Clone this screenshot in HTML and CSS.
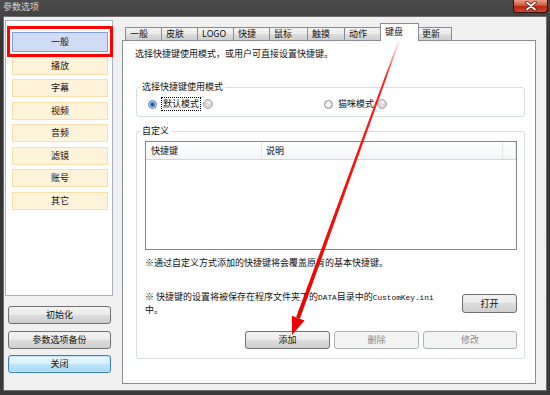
FILE: index.html
```html
<!DOCTYPE html>
<html lang="zh-CN">
<head>
  <meta charset="UTF-8" />
  <title>参数选项</title>
  <link rel="stylesheet" href="styles.css">
</head>
<body>
  <div class="window">
    <div class="titlebar">
      <span class="title">参数选项</span>
      <span class="close">
        <svg width="12" height="10" viewBox="0 0 12 10">
          <path d="M2 1.5 L10 8.5 M10 1.5 L2 8.5" stroke="#5a1a12" stroke-width="3.4" stroke-linecap="round"/>
          <path d="M2 1.5 L10 8.5 M10 1.5 L2 8.5" stroke="#fff" stroke-width="1.8" stroke-linecap="round"/>
        </svg>
      </span>
    </div>

    <div class="client">
      <div class="sidebar">
        <div class="nav">
          <div class="nav-item active">一般</div>
          <div class="nav-item">播放</div>
          <div class="nav-item">字幕</div>
          <div class="nav-item">视频</div>
          <div class="nav-item">音频</div>
          <div class="nav-item">滤镜</div>
          <div class="nav-item">账号</div>
          <div class="nav-item">其它</div>
          <div class="mark"></div>
        </div>
        <div class="side-buttons">
          <button class="btn">初始化</button>
          <button class="btn">参数选项备份</button>
          <button class="btn focus">关闭</button>
        </div>
      </div>

      <div class="tabs">
        <div class="tab-strip">
          <div class="tab w37">一般</div>
          <div class="tab w37">皮肤</div>
          <div class="tab w37">LOGO</div>
          <div class="tab w37">快捷</div>
          <div class="tab w39">鼠标</div>
          <div class="tab w38">触摸</div>
          <div class="tab w39">动作</div>
          <div class="tab selected">键盘</div>
          <div class="tab w35">更新</div>
        </div>

        <div class="page">
          <p class="intro">选择快捷键使用模式，或用户可直接设置快捷键。</p>

          <fieldset class="group">
            <legend>选择快捷键使用模式</legend>
            <div class="modes">
              <label class="option">
                <span class="radio on"></span>
                <span class="focused">默认模式</span>
                <span class="help">?</span>
              </label>
              <label class="option">
                <span class="radio"></span>
                <span>猫咪模式</span>
                <span class="help">?</span>
              </label>
            </div>
          </fieldset>

          <fieldset class="group custom">
            <legend>自定义</legend>
            <div class="list">
              <div class="list-head">
                <span>快捷键</span>
                <span>说明</span>
                <span></span>
              </div>
            </div>
            <p class="note">※通过自定义方式添加的快捷键将会覆盖原有的基本快捷键。</p>
            <div class="note-row">
              <p class="note small">※ 快捷键的设置将被保存在程序文件夹下的<span class="mono">DATA</span>目录中的<span class="mono">CustomKey.ini</span><br>中。</p>
              <button class="btn open">打开</button>
            </div>
            <div class="actions">
              <button class="btn w85">添加</button>
              <button class="btn w85" disabled>删除</button>
              <button class="btn w94" disabled>修改</button>
            </div>
          </fieldset>
        </div>
      </div>
    </div>

    <svg class="arrow" width="550" height="395" viewBox="0 0 550 395">
      <defs>
        <linearGradient id="fade" x1="400" y1="38" x2="298" y2="318" gradientUnits="userSpaceOnUse">
          <stop offset="0" stop-color="#ff2020" stop-opacity="0"/>
          <stop offset="0.14" stop-color="#ff1010" stop-opacity="0.95"/>
          <stop offset="1" stop-color="#ee0000"/>
        </linearGradient>
      </defs>
      <polygon points="400.7,38.3 399.3,37.7 296.1,317.3 299.9,318.7" fill="url(#fade)"/>
      <polygon points="292,335 304.5,320.5 291.8,315.8" fill="#ee0000"/>
    </svg>
  </div>
</body>
</html>
```

FILE: styles.css
```css
* {
  box-sizing: border-box;
}

body {
  margin: 0;
  background: #2f2f2f;
  font-family: "Noto Sans CJK SC", "Liberation Sans", sans-serif;
  font-size: 9px;
  line-height: 12px;
  color: #111;
}

p {
  margin: 0;
}

.window {
  position: relative;
  width: 550px;
  height: 395px;
  display: flex;
  flex-direction: column;
  padding: 0 3px 4px;
  background: linear-gradient(#4c4c4c, #333 40px, #3a3a3a);
}

/* title bar */
.titlebar {
  height: 16px;
  display: flex;
  justify-content: space-between;
  align-items: flex-start;
}

.title {
  color: #d6d6d6;
  padding-top: 1px;
}

.close {
  width: 35px;
  height: 13px;
  margin-right: -1px;
  display: flex;
  align-items: center;
  justify-content: center;
  border: 1px solid #3a0d08;
  border-top: none;
  border-radius: 0 0 4px 4px;
  background: linear-gradient(#e9a08f, #d5553e 45%, #b82811 55%, #cf4a2e);
}

/* client area */
.client {
  flex: 1;
  display: flex;
  gap: 9px;
  padding: 3px 10px 0 1px;
  background: #f0f0f0;
  border: 1px solid #6e6e6e;
}

.sidebar {
  width: 108px;
  display: flex;
  flex-direction: column;
}

.nav {
  position: relative;
  height: 276px;
  display: flex;
  flex-direction: column;
  gap: 4.5px;
  padding: 11px 0 0 6px;
  background: #fff;
  border: 1px solid #aab3c0;
}

.nav-item {
  width: 96px;
  height: 18px;
  line-height: 16px;
  text-align: center;
  background: #fff3d9;
  border: 1px solid #fbdfab;
}

.nav-item.active {
  height: 20px;
  line-height: 18px;
  background: #cfdcf3;
  border-color: #7f9fd6;
}

.mark {
  position: absolute;
  left: 1px;
  top: 5px;
  width: 106px;
  height: 31px;
  border: 3px solid #ff0000;
}

.side-buttons {
  display: flex;
  flex-direction: column;
  gap: 6.5px;
  margin-top: 10px;
  padding-left: 3px;
}

.side-buttons .btn {
  width: 103px;
}

/* buttons */
.btn {
  height: 18px;
  padding: 0;
  font: inherit;
  line-height: 16px;
  color: #111;
  border: 1px solid #707070;
  border-radius: 3px;
  background: linear-gradient(#f2f2f2, #ebebeb 49%, #dddddd 50%, #cfcfcf);
}

.btn.focus {
  border-color: #3c7fb1;
  background: linear-gradient(#eaf6fd, #d9f0fc 49%, #bee6fd 50%, #a7d9f5);
  box-shadow: inset 0 0 0 1px #c2e6fb;
}

.btn:disabled {
  color: #8a8a8a;
  border-color: #adb2b5;
  background: #f4f4f4;
}

.w85 { width: 85px; }
.w94 { width: 94px; }

/* tabs */
.tabs {
  width: 414px;
  display: flex;
  flex-direction: column;
}

.tab-strip {
  height: 20px;
  display: flex;
  align-items: flex-end;
  padding-left: 3px;
}

.tab {
  height: 13px;
  margin-right: -1px;
  padding-left: 4px;
  line-height: 12px;
  white-space: nowrap;
  border: 1px solid #898c95;
  border-bottom: none;
  background: linear-gradient(#f3f3f3, #ebebeb 50%, #dddddd 51%, #cfcfcf);
}

.w35 { width: 35px; }
.w37 { width: 37px; }
.w38 { width: 38px; }
.w39 { width: 39px; }

.tab.selected {
  position: relative;
  z-index: 1;
  width: 39px;
  height: 18px;
  margin: 0 -2px -1px -2px;
  padding-top: 2px;
  background: #fff;
}

.page {
  height: 344px;
  padding: 7px 10px 0 12px;
  background: #fff;
  border: 1px solid #898c95;
}

/* group boxes */
.group {
  margin: 21px 0 0 1px;
  padding: 5px 7px 6px 8px;
  border: 1px solid #d5dfe5;
  border-radius: 3px;
}

.group legend {
  margin-left: -5px;
  padding: 0 2px;
}

.group.custom {
  margin-top: 8px;
  padding: 4px 7px 9px 8px;
}

.modes {
  display: grid;
  grid-template-columns: 176px auto;
  padding-left: 3px;
}

.option {
  display: flex;
  align-items: center;
  gap: 3px;
}

.radio {
  width: 9px;
  height: 9px;
  margin-right: 2px;
  border-radius: 50%;
  border: 1px solid #8e8f8f;
  background: radial-gradient(circle at 40% 40%, #fff, #d6d6d6);
}

.radio.on {
  border-color: #5a7fa8;
  background: radial-gradient(circle, #1d5ea6 0 1.8px, #8dbbe6 2.4px 2.8px, #f2f2f2 3.4px);
}

.focused {
  outline: 1px dotted #000;
  padding: 0 1px;
}

.help {
  width: 10px;
  height: 10px;
  border-radius: 50%;
  border: 1px solid #adadad;
  background: #d4d4d4;
  color: #fff;
  font: bold 8px/8px "Liberation Sans", sans-serif;
  text-align: center;
}

/* list view */
.list {
  height: 109px;
  border: 1px solid #828790;
}

.list-head {
  display: grid;
  grid-template-columns: 116px 241px 1fr;
  height: 18px;
  background: linear-gradient(#fff, #f4f5f7);
  border-bottom: 1px solid #d5d5d5;
}

.list-head span {
  padding-left: 5px;
  line-height: 17px;
  border-right: 1px solid #e3e8ee;
}

.list-head span:nth-child(2) {
  padding-left: 4px;
}

.note {
  margin-top: 7px;
}

.note-row {
  display: flex;
  justify-content: space-between;
  align-items: flex-start;
  margin-top: 22px;
}

.note.small {
  margin: 0;
  line-height: 11px;
}

.mono {
  font-family: "Liberation Mono", monospace;
  font-size: 7.8px;
}

.btn.open {
  width: 55px;
  height: 19px;
  margin-top: 3px;
}

.actions {
  display: flex;
  justify-content: flex-end;
  gap: 4px;
  margin-top: 16px;
}

/* annotation arrow */
.arrow {
  position: absolute;
  left: 0;
  top: 0;
  pointer-events: none;
}
```
